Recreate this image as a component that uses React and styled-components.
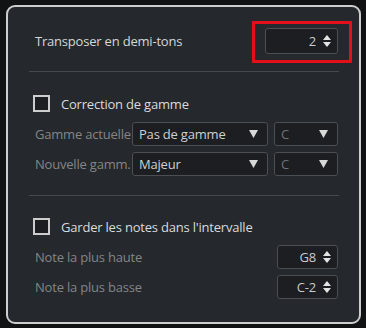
import React, { useState } from 'react';
import styled, { createGlobalStyle } from 'styled-components';

const GlobalStyle = createGlobalStyle`
  body {
    margin: 0;
    background: #111214;
    font-family: 'Open Sans', 'Noto Sans', sans-serif;
    letter-spacing: -0.2px;
  }
`;

const Spinner = ({ value, width }) => (
  <SpinBox width={width}>
    <SpinValue>{value}</SpinValue>
    <Arrows>
      <svg width="8" height="12" viewBox="0 0 8 12">
        <path d="M4 0 L8 5 L0 5 Z" fill="#e4e4e4" />
        <path d="M0 7 L8 7 L4 12 Z" fill="#e4e4e4" />
      </svg>
    </Arrows>
  </SpinBox>
);

const Select = ({ value, width, dim }) => (
  <SelectBox width={width}>
    <SelectText dim={dim}>{value}</SelectText>
    <svg width="9" height="8" viewBox="0 0 9 8">
      <path d="M0 0 L9 0 L4.5 8 Z" fill="#d8d8d8" />
    </svg>
  </SelectBox>
);

const App = () => {
  const [scale, setScale] = useState(false);
  const [keep, setKeep] = useState(false);

  return (
    <>
      <GlobalStyle />
      <Frame>
        <Panel>
          <TopRow>
            <MainLabel>Transposer en demi-tons</MainLabel>
            <Highlight>
              <Spinner value="2" width={73} />
            </Highlight>
          </TopRow>
          <Divider />
          <Section>
            <CheckRow onClick={() => setScale(!scale)}>
              <CheckBox checked={scale} />
              <CheckLabel>Correction de gamme</CheckLabel>
            </CheckRow>
            <FieldRow>
              <FieldLabel width={97}>Gamme actuelle</FieldLabel>
              <Select value="Pas de gamme" width={136} />
              <Select value="C" width={64} dim />
            </FieldRow>
            <FieldRow>
              <FieldLabel width={97}>Nouvelle gamm.</FieldLabel>
              <Select value="Majeur" width={136} />
              <Select value="C" width={64} dim />
            </FieldRow>
          </Section>
          <Divider />
          <Section>
            <CheckRow onClick={() => setKeep(!keep)}>
              <CheckBox checked={keep} />
              <CheckLabel>Garder les notes dans l'intervalle</CheckLabel>
            </CheckRow>
            <FieldRow>
              <FieldLabel>Note la plus haute</FieldLabel>
              <Spinner value="G8" width={61} />
            </FieldRow>
            <FieldRow>
              <FieldLabel>Note la plus basse</FieldLabel>
              <Spinner value="C-2" width={61} />
            </FieldRow>
          </Section>
        </Panel>
      </Frame>
    </>
  );
};

export default App;

const Frame = styled.div`
  width: 366px;
  height: 328px;
  box-sizing: border-box;
  padding: 5px 5px 4px 6px;
`;

const Panel = styled.div`
  box-sizing: border-box;
  width: 355px;
  height: 319px;
  border: 2px solid #cdcdcd;
  border-radius: 9px;
  background: #25282c;
  padding: 0 20px 0 21px;
  display: flex;
  flex-direction: column;
`;

const TopRow = styled.div`
  display: flex;
  align-items: center;
  justify-content: space-between;
  margin-top: 21px;
  margin-bottom: 17px;
  padding: 0 1px 0 6px;
`;

const MainLabel = styled.span`
  font-size: 13px;
  color: #d6d7d8;
`;

const Highlight = styled.div`
  position: relative;
  &::after {
    content: '';
    position: absolute;
    left: -13px;
    top: -7px;
    right: -14px;
    bottom: -9px;
    border: 3px solid #e3101b;
    border-radius: 1px;
    pointer-events: none;
  }
`;

const SpinBox = styled.div`
  box-sizing: border-box;
  width: ${(p) => p.width}px;
  height: ${(p) => (p.width > 70 ? 26 : 24)}px;
  background: #1c1e21;
  border: 1px solid #4b4e53;
  border-radius: 3px;
  display: flex;
  align-items: center;
  justify-content: flex-end;
  padding-right: 6px;
  gap: 7px;
`;

const SpinValue = styled.span`
  font-size: 13px;
  color: #c9cacc;
`;

const Arrows = styled.span`
  display: flex;
  align-items: center;
`;

const Divider = styled.div`
  height: 1px;
  background: #45484d;
`;

const Section = styled.div`
  display: flex;
  flex-direction: column;
  padding: 23px 1px 0 4px;
  margin-bottom: 19px;
  &:last-of-type {
    padding-top: 22px;
    margin-bottom: 0;
  }
`;

const CheckRow = styled.div`
  display: flex;
  align-items: center;
  gap: 11px;
  height: 17px;
  margin-bottom: 10px;
  cursor: pointer;
`;

const CheckBox = styled.span`
  box-sizing: border-box;
  width: 17px;
  height: 17px;
  border: 2px solid #cdcdcd;
  background: ${(p) => (p.checked ? '#cdcdcd' : '#1c1e21')};
`;

const CheckLabel = styled.span`
  font-size: 13px;
  color: #dadbdc;
`;

const FieldRow = styled.div`
  display: flex;
  align-items: center;
  gap: 6px;
  height: 24px;
  margin-bottom: 6px;
  & + & + & {
    margin-bottom: 0;
  }
  &:last-child {
    margin-bottom: 0;
  }
`;

const FieldLabel = styled.span`
  flex: ${(p) => (p.width ? `0 0 ${p.width}px` : '1')};
  margin-left: 2px;
  margin-right: ${(p) => (p.width ? '-6px' : '0')};
  font-size: 13px;
  color: #838689;
  white-space: nowrap;
`;

const SelectBox = styled.div`
  box-sizing: border-box;
  width: ${(p) => p.width}px;
  height: 24px;
  background: #1c1e21;
  border: 1px solid #4b4e53;
  border-radius: 3px;
  display: flex;
  align-items: center;
  justify-content: space-between;
  padding: 0 9px 0 6px;
`;

const SelectText = styled.span`
  font-size: 13px;
  color: ${(p) => (p.dim ? '#6f7276' : '#cfd0d2')};
`;
